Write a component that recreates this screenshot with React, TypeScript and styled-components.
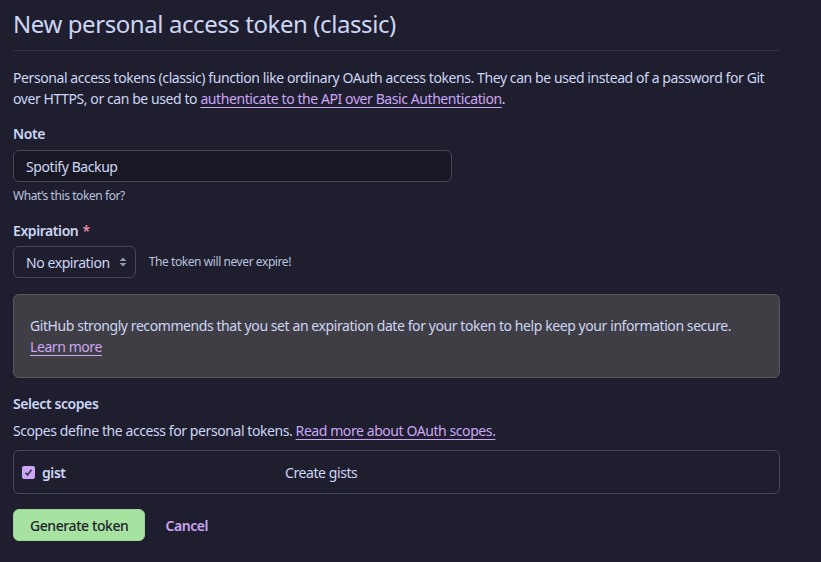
import React from "react";
import styled, { createGlobalStyle } from "styled-components";

const Global = createGlobalStyle`
  html, body { margin: 0; padding: 0; background: #1e1e2e; }
  body {
    font-family: "Noto Sans", "Liberation Sans", sans-serif;
    color: #cdd6f4;
    font-size: 14px;
    letter-spacing: -0.03em;
  }
`;

const Page = styled.div`
  padding: 0 41px 0 13px;
  width: 767px;
`;

const Title = styled.h2`
  margin: 0;
  padding: 10px 0 13px;
  font-size: 24px;
  font-weight: 400;
  line-height: 27px;
  border-bottom: 1px solid #313244;
`;

const Para = styled.p<{ $mt?: number }>`
  margin: ${(p) => p.$mt ?? 16}px 0 0;
  line-height: 21px;
`;

const Link = styled.a`
  color: #cba6f7;
  text-decoration: underline;
  text-underline-offset: 3px;
`;

const Label = styled.div<{ $mt: number }>`
  margin-top: ${(p) => p.$mt}px;
  font-weight: 600;
  line-height: 20px;
`;

const Required = styled.span`
  color: #f38ba8;
  margin-left: 4px;
`;

const TextInput = styled.div`
  margin-top: 6px;
  width: 439px;
  height: 32px;
  box-sizing: border-box;
  border: 1px solid #45475a;
  border-radius: 6px;
  background: #181825;
  padding: 0 12px;
  display: flex;
  align-items: center;
`;

const Hint = styled.div`
  margin-top: 6px;
  font-size: 12px;
  color: #bac2de;
  line-height: 16px;
`;

const InlineHint = styled.span`
  font-size: 12px;
  color: #bac2de;
  line-height: 16px;
`;

const Row = styled.div`
  margin-top: 5px;
  display: flex;
  align-items: center;
  gap: 13px;
`;

const Select = styled.div`
  height: 32px;
  box-sizing: border-box;
  border: 1px solid #45475a;
  border-radius: 6px;
  background: #1e1e2e;
  padding: 0 7px 0 12px;
  display: flex;
  align-items: center;
  gap: 8px;
`;

const Warning = styled.div`
  margin-top: 16px;
  box-sizing: border-box;
  border: 1px solid #5b5560;
  border-radius: 6px;
  background: #403e45;
  padding: 20px 16px;
  line-height: 21px;
`;

const ScopeBox = styled.div`
  margin-top: 9px;
  height: 44px;
  box-sizing: border-box;
  border: 1px solid #45475a;
  border-radius: 6px;
  display: grid;
  grid-template-columns: 263px 1fr;
  align-items: center;
  padding: 0 8px;
`;

const ScopeName = styled.label`
  display: flex;
  align-items: center;
  gap: 7px;
  font-weight: 600;
`;

const Check = styled.span`
  width: 13px;
  height: 13px;
  border-radius: 2px;
  background: #cba6f7;
  display: inline-flex;
  align-items: center;
  justify-content: center;
`;

const Actions = styled.div`
  margin-top: 15px;
  display: flex;
  align-items: center;
  gap: 20px;
`;

const PrimaryButton = styled.button`
  height: 32px;
  padding: 0 16px;
  border: 1px solid #9bd596;
  border-radius: 6px;
  background: #a6e3a1;
  color: #1e1e2e;
  font-family: inherit;
  letter-spacing: inherit;
  font-size: 14px;
  font-weight: 500;
`;

const CancelLink = styled.a`
  color: #cba6f7;
  font-weight: 600;
  text-decoration: none;
`;

export default function App() {
  return (
    <>
      <Global />
      <Page>
        <Title>New personal access token (classic)</Title>
        <Para>
          Personal access tokens (classic) function like ordinary OAuth access tokens. They can be used instead of a
          password for Git over HTTPS, or can be used to{" "}
          <Link>authenticate to the API over Basic Authentication</Link>.
        </Para>
        <Label $mt={15}>Note</Label>
        <TextInput>Spotify Backup</TextInput>
        <Hint>What’s this token for?</Hint>
        <Label $mt={17}>
          Expiration<Required>*</Required>
        </Label>
        <Row>
          <Select>
            No expiration
            <svg width="10" height="14" viewBox="0 0 10 14">
              <path d="M1.5 6 L5 2.5 L8.5 6 Z" fill="#9399b2" />
              <path d="M1.5 8 L5 11.5 L8.5 8 Z" fill="#9399b2" />
            </svg>
          </Select>
          <InlineHint>The token will never expire!</InlineHint>
        </Row>
        <Warning>
          GitHub strongly recommends that you set an expiration date for your token to help keep your information
          secure.
          <br />
          <Link>Learn more</Link>
        </Warning>
        <Label $mt={16}>Select scopes</Label>
        <Para $mt={6}>
          Scopes define the access for personal tokens. <Link>Read more about OAuth scopes.</Link>
        </Para>
        <ScopeBox>
          <ScopeName>
            <Check>
              <svg width="9" height="9" viewBox="0 0 9 9">
                <path d="M1.5 4.8 L3.6 7 L7.5 1.8" stroke="#313244" strokeWidth="1.6" fill="none" />
              </svg>
            </Check>
            gist
          </ScopeName>
          <span>Create gists</span>
        </ScopeBox>
        <Actions>
          <PrimaryButton>Generate token</PrimaryButton>
          <CancelLink>Cancel</CancelLink>
        </Actions>
      </Page>
    </>
  );
}
